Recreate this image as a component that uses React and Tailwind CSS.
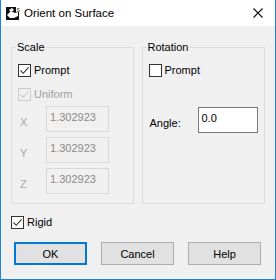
import React from "react";

function Check({ checked, disabled }) {
  const border = disabled ? "border-[#cccccc] bg-[#f0f0f0]" : "border-[#333333] bg-white";
  const stroke = disabled ? "#cccccc" : "#333333";
  return (
    <span className={`relative flex h-[13px] w-[13px] shrink-0 items-center justify-center border ${border}`}>
      {checked && (
        <svg width="11" height="11" viewBox="0 0 11 11" className="block">
          <path d="M1.5 5.5 L4.2 8.3 L9.6 2.4" fill="none" stroke={stroke} strokeWidth="1.1" />
        </svg>
      )}
    </span>
  );
}

function CheckRow({ label, checked, disabled, className = "" }) {
  return (
    <div className={`flex h-[16px] items-center gap-[3px] ${className}`}>
      <Check checked={checked} disabled={disabled} />
      <span className={disabled ? "text-[#a0a0a0]" : "text-black"}>{label}</span>
    </div>
  );
}

function DisabledField({ axis, value }) {
  return (
    <div className="flex h-[26px] items-center">
      <span className="w-[34px] pl-[8px] pt-[6px] text-[#a8a8a8]">{axis}</span>
      <div className="h-[26px] w-[63px] border border-[#d9d9d9] bg-[#f0f0f0] pl-[3px] pt-[3px] leading-[14px] text-[#8a8a8a]">
        {value}
      </div>
    </div>
  );
}

function Group({ title, children, className = "" }) {
  return (
    <fieldset className={`border border-[#dcdcdc] ${className}`}>
      <legend className="ml-[4px] px-[1px] leading-[16px] text-black">{title}</legend>
      {children}
    </fieldset>
  );
}

function Btn({ children, primary }) {
  return (
    <button
      className={`flex h-[23px] w-[73px] items-center justify-center bg-[#e1e1e1] text-black ${
        primary ? "border-2 border-[#0078d7]" : "border border-[#adadad]"
      }`}
    >
      {children}
    </button>
  );
}

export default function App() {
  return (
    <div
      className="flex h-[280px] w-[276px] flex-col border border-t-0 border-[#1883d7] bg-[#f0f0f0] text-[11px] leading-[16px]"
      style={{ fontFamily: '"Liberation Sans", Arial, sans-serif' }}
    >
      <div className="flex h-[26px] shrink-0 items-center bg-white pl-[5px] pr-[10px]">
        <svg width="15" height="15" viewBox="0 0 15 15" className="mr-[3px]">
          <rect x="0" y="1" width="13" height="13" fill="#111" />
          <path d="M1 9 L5 5 L9 7 L12 6 L12 10 L8 12 L4 12 Z" fill="#fff" />
          <path d="M3 4 L6 2 L8 4 L5 6 Z" fill="#fff" />
          <rect x="10" y="1" width="5" height="5" fill="#fff" />
          <text x="10.5" y="5.5" fontSize="5" fill="#111" fontFamily="Liberation Sans">S</text>
        </svg>
        <span className="text-[11.5px] text-black">Orient on Surface</span>
        <svg width="12" height="12" viewBox="0 0 12 12" className="ml-auto mr-[1px]">
          <path d="M1.5 1.5 L10.5 10.5 M10.5 1.5 L1.5 10.5" stroke="#111" strokeWidth="1.1" />
        </svg>
      </div>

      <div className="flex flex-1 flex-col px-[10px] pt-[13px]">
        <div className="flex gap-[8px]">
          <Group title="Scale" className="h-[165px] w-[123px]">
            <div className="flex flex-col pl-[6px] pt-[7px]">
              <CheckRow label="Prompt" checked />
              <CheckRow label="Uniform" checked disabled className="mt-[8px]" />
              <div className="mt-[4px] flex flex-col gap-[5px] -ml-[6px]">
                <DisabledField axis="X" value="1.302923" />
                <DisabledField axis="Y" value="1.302923" />
                <DisabledField axis="Z" value="1.302923" />
              </div>
            </div>
          </Group>
          <Group title="Rotation" className="h-[165px] w-[124px]">
            <div className="flex flex-col pl-[6px] pt-[7px]">
              <CheckRow label="Prompt" />
              <div className="mt-[29px] flex items-center">
                <span className="w-[49px] pl-[1px] pt-[6px]">Angle:</span>
                <div className="h-[26px] w-[60px] border border-[#7a7a7a] bg-white pl-[3px] pt-[3px] leading-[14px]">
                  0.0
                </div>
              </div>
            </div>
          </Group>
        </div>

        <CheckRow label="Rigid" checked className="mt-[10px]" />

        <div className="mt-[12px] flex gap-[14px] pl-[3px]">
          <Btn primary>OK</Btn>
          <Btn>Cancel</Btn>
          <Btn>Help</Btn>
        </div>
      </div>
    </div>
  );
}
